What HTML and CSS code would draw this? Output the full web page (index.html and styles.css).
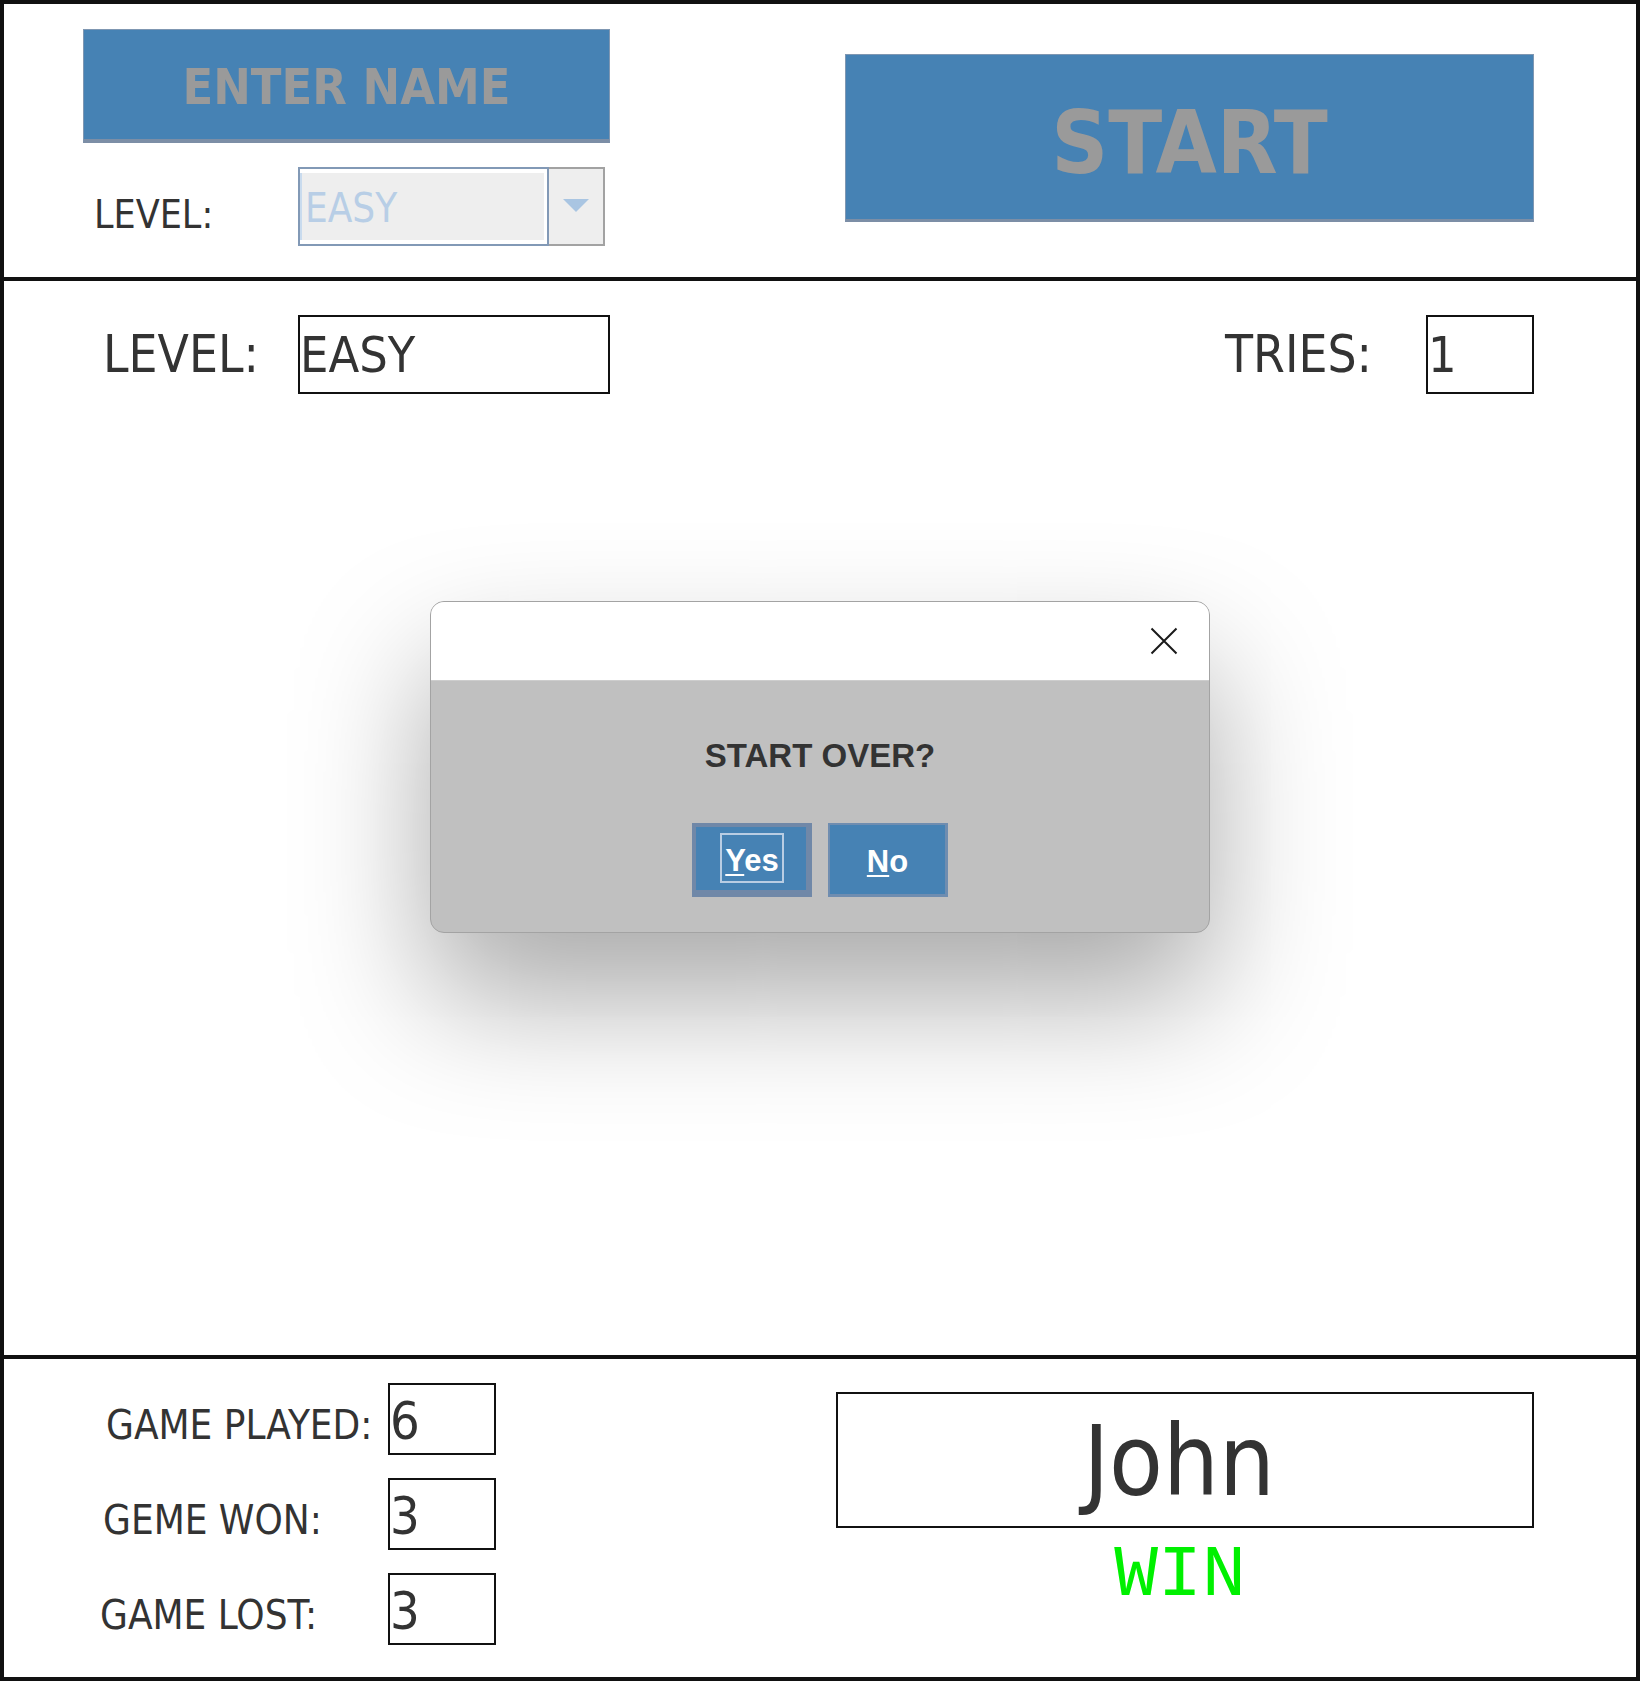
FILE: index.html
```html
<!DOCTYPE html>
<html lang="en">
<head>
<meta charset="utf-8">
<title>Guess Game</title>
<link rel="stylesheet" href="styles.css">
</head>
<body>
<div class="frame">
  <header class="top">
    <div class="top-left">
      <div class="btn btn-name">ENTER NAME</div>
      <div class="level-row">
        <span class="level-label">LEVEL:</span>
        <div class="combo">
          <div class="combo-field">EASY</div>
          <div class="combo-arrow"><span class="tri"></span></div>
        </div>
      </div>
    </div>
    <div class="btn btn-start">START</div>
  </header>

  <main class="play">
    <div class="play-row">
      <span class="lbl lbl-level">LEVEL:</span>
      <div class="box box-level">EASY</div>
      <span class="lbl lbl-tries">TRIES:</span>
      <div class="box box-tries">1</div>
    </div>
  </main>

  <footer class="stats">
    <div class="stat-grid">
      <span class="slbl s1">GAME PLAYED:</span><div class="sbox">6</div>
      <span class="slbl s2">GEME WON:</span><div class="sbox">3</div>
      <span class="slbl s3">GAME LOST:</span><div class="sbox">3</div>
    </div>
    <div class="player">
      <div class="name-box">John</div>
      <div class="result">WIN</div>
    </div>
  </footer>
</div>

<div class="dialog">
  <div class="dlg-title">
    <svg class="dlg-close" width="28" height="28" viewBox="0 0 28 28" aria-hidden="true">
      <path d="M1.5 1.5 L26.5 26.5 M26.5 1.5 L1.5 26.5" stroke="#1a1a1a" stroke-width="2" fill="none"/>
    </svg>
  </div>
  <div class="dlg-body">
    <div class="dlg-msg">START OVER?</div>
    <div class="dlg-btns">
      <div class="dbtn dbtn-yes"><span class="focus"><u>Y</u>es</span></div>
      <div class="dbtn dbtn-no"><span class="plain"><u>N</u>o</span></div>
    </div>
  </div>
</div>
</body>
</html>
```

FILE: styles.css
```css
html, body {
  margin: 0;
  padding: 0;
  background: #ffffff;
}

body {
  font-family: "DejaVu Sans Condensed", "DejaVu Sans", sans-serif;
  font-stretch: condensed;
  color: #333333;
}

.frame {
  box-sizing: border-box;
  width: 1640px;
  height: 1681px;
  border: 4px solid #111111;
  display: flex;
  flex-direction: column;
  background: #ffffff;
}

/* ---------- top bar ---------- */
.top {
  box-sizing: border-box;
  height: 277px;
  border-bottom: 4px solid #111111;
  display: flex;
  align-items: flex-start;
  padding: 25px 0 0 79px;
}

.top-left {
  width: 527px;
  display: flex;
  flex-direction: column;
}

.btn {
  box-sizing: border-box;
  background: #4682b4;
  color: #9a9a9a;
  font-weight: bold;
  display: flex;
  align-items: center;
  justify-content: center;
  border: 1px solid #7f97b2;
}

.btn-name {
  height: 114px;
  border-bottom: 4px solid #7c8ea6;
  padding-top: 4px;
  font-size: 50px;
}

.level-row {
  margin-top: 24px;
  height: 79px;
  display: flex;
  align-items: flex-start;
}

.level-label {
  width: 204px;
  margin-left: 11px;
  padding-top: 25px;
  font-size: 39px;
  line-height: 45px;
  color: #333333;
}

.combo {
  display: flex;
  height: 79px;
}

.combo-field {
  box-sizing: border-box;
  width: 251px;
  height: 79px;
  background: #eeeeee;
  border: 2px solid #8299b6;
  box-shadow: inset 0 4px 0 #ffffff, inset 0 -4px 0 #ffffff, inset 2px 0 0 #c9dbee, inset -3px 0 0 #ffffff;
  color: #b8cee6;
  font-size: 40px;
  line-height: 46px;
  padding: 16px 0 0 5px;
}

.combo-arrow {
  box-sizing: border-box;
  width: 56px;
  height: 79px;
  background: #eeeeee;
  border: 2px solid #a2a2a2;
  border-left: none;
  display: flex;
  align-items: center;
  justify-content: center;
  padding-bottom: 2px;
}

.tri {
  width: 0;
  height: 0;
  border-left: 13px solid transparent;
  border-right: 13px solid transparent;
  border-top: 13px solid #a9c5e2;
}

.btn-start {
  width: 689px;
  height: 168px;
  margin: 25px 0 0 235px;
  border-bottom: 3px solid #7c8ea6;
  padding-top: 10px;
  font-size: 88px;
}

/* ---------- play area ---------- */
.play {
  box-sizing: border-box;
  height: 1078px;
  border-bottom: 4px solid #111111;
  padding: 34px 0 0 99px;
}

.play-row {
  display: flex;
  align-items: baseline;
}

.lbl {
  font-size: 51px;
  color: #333333;
}

.lbl-level {
  width: 195px;
}

.lbl-tries {
  width: 201px;
  margin-left: 615px;
}

.box {
  box-sizing: border-box;
  height: 79px;
  border: 2px solid #111111;
  font-size: 50px;
  line-height: 73px;
  padding-top: 2px;
  color: #333333;
}

.box-level {
  width: 312px;
}

.box-tries {
  width: 108px;
}

/* ---------- stats ---------- */
.stats {
  flex: 1;
  display: flex;
  align-items: flex-start;
  padding: 24px 0 0 99px;
}

.stat-grid {
  display: grid;
  grid-template-columns: 285px 108px;
  grid-auto-rows: 72px;
  row-gap: 23px;
  align-items: baseline;
}

.slbl {
  font-size: 40px;
  color: #333333;
}

.s1 { padding-left: 3px; }
.s3 { margin-left: -3px; }

.sbox {
  box-sizing: border-box;
  width: 108px;
  height: 72px;
  border: 2px solid #111111;
  font-size: 52px;
  line-height: 60px;
  padding-top: 6px;
  color: #333333;
}

.player {
  width: 698px;
  margin: 9px 0 0 340px;
  display: flex;
  flex-direction: column;
}

.name-box {
  box-sizing: border-box;
  height: 136px;
  border: 2px solid #111111;
  text-align: center;
  font-size: 98px;
  line-height: 114px;
  padding-top: 10px;
  padding-right: 12px;
  color: #333333;
}

.result {
  margin-top: 6px;
  text-align: center;
  padding-right: 10px;
  font-family: "Liberation Mono", "DejaVu Sans Mono", monospace;
  font-stretch: normal;
  font-size: 73px;
  line-height: 84px;
  color: #00f000;
}

/* ---------- dialog ---------- */
.dialog {
  position: absolute;
  left: 430px;
  top: 601px;
  box-sizing: border-box;
  width: 780px;
  height: 332px;
  border: 1px solid #a3a3a3;
  border-radius: 14px;
  background: #c0c0c0;
  overflow: hidden;
  display: flex;
  flex-direction: column;
  box-shadow: 0 65px 130px 0 rgba(0, 0, 0, 0.34);
  font-family: "Liberation Sans", Arial, sans-serif;
  font-stretch: normal;
}

.dlg-title {
  height: 78px;
  background: #ffffff;
  display: flex;
  align-items: center;
  justify-content: flex-end;
  padding-right: 31px;
}

.dlg-close {
  display: block;
}

.dlg-body {
  flex: 1;
  border-top: 1px solid #cdcdcd;
  display: flex;
  flex-direction: column;
  align-items: center;
  padding-top: 56px;
}

.dlg-msg {
  font-size: 33px;
  font-weight: bold;
  line-height: 38px;
  color: #333333;
}

.dlg-btns {
  margin-top: 48px;
  display: flex;
  gap: 16px;
}

.dbtn {
  box-sizing: border-box;
  width: 120px;
  height: 74px;
  background: #4682b4;
  color: #ffffff;
  font-size: 31px;
  font-weight: bold;
  display: flex;
  justify-content: center;
  align-items: flex-start;
}

.dbtn u {
  text-decoration-thickness: 2px;
  text-underline-offset: 3px;
}

.dbtn-yes {
  border: 4px solid #7088a8;
  border-right-width: 6px;
  border-bottom-width: 7px;
  padding-top: 6px;
  padding-left: 2px;
}

.focus {
  display: block;
  box-sizing: border-box;
  width: 64px;
  height: 50px;
  border: 2px solid #b9cde3;
  text-align: center;
  line-height: 37px;
  padding-top: 7px;
}

.dbtn-no {
  border: 2px solid #6f8db0;
  border-right-width: 3px;
  border-bottom-width: 3px;
  padding-top: 18px;
}

.plain {
  display: block;
  line-height: 37px;
}
```
